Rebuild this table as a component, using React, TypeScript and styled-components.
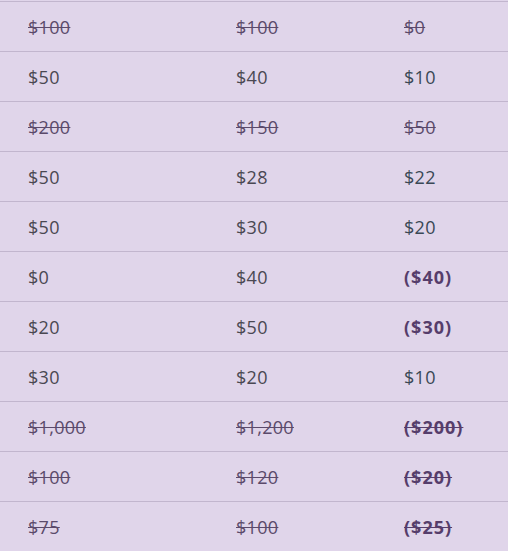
import React from 'react';
import styled, { createGlobalStyle } from 'styled-components';

const GlobalStyle = createGlobalStyle`
  html, body {
    margin: 0;
    padding: 0;
    background: #e0d5ea;
  }
  body {
    font-family: "Open Sans", "Noto Sans", sans-serif;
    overflow: hidden;
  }
`;

const Table = styled.div`
  padding-top: 1px;
  width: 508px;
`;

const Row = styled.div`
  display: grid;
  grid-template-columns: 208px 168px 1fr;
  align-items: center;
  height: 49px;
  padding-left: 28px;
  border-top: 1px solid #c2b6ce;
`;

const Cell = styled.span<{ $struck?: boolean; $negative?: boolean; $diff?: boolean }>`
  font-size: 18px;
  line-height: 1;
  letter-spacing: ${p => (p.$negative ? '1px' : '0.3px')};
  font-weight: ${p => (p.$negative ? 700 : 400)};
  color: ${p =>
    p.$negative ? '#563d6b' : p.$struck ? '#5b4a6b' : p.$diff ? '#3a4856' : '#4a4852'};
  text-decoration: ${p => (p.$struck ? 'line-through' : 'none')};
  text-decoration-thickness: 1px;
`;

type Item = { a: string; b: string; c: string; struck?: boolean; negative?: boolean };

const rows: Item[] = [
  { a: '$100', b: '$100', c: '$0', struck: true },
  { a: '$50', b: '$40', c: '$10' },
  { a: '$200', b: '$150', c: '$50', struck: true },
  { a: '$50', b: '$28', c: '$22' },
  { a: '$50', b: '$30', c: '$20' },
  { a: '$0', b: '$40', c: '($40)', negative: true },
  { a: '$20', b: '$50', c: '($30)', negative: true },
  { a: '$30', b: '$20', c: '$10' },
  { a: '$1,000', b: '$1,200', c: '($200)', struck: true, negative: true },
  { a: '$100', b: '$120', c: '($20)', struck: true, negative: true },
  { a: '$75', b: '$100', c: '($25)', struck: true, negative: true },
];

const App: React.FC = () => (
  <>
    <GlobalStyle />
    <Table>
      {rows.map((r, i) => (
        <Row key={i}>
          <Cell $struck={r.struck}>{r.a}</Cell>
          <Cell $struck={r.struck}>{r.b}</Cell>
          <Cell $struck={r.struck} $negative={r.negative} $diff>
            {r.c}
          </Cell>
        </Row>
      ))}
    </Table>
  </>
);

export default App;
